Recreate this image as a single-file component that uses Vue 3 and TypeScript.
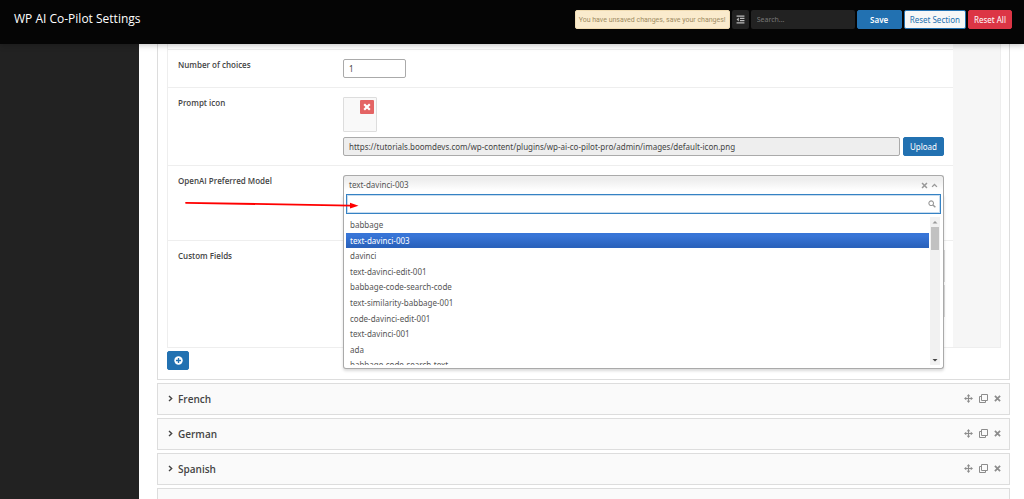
<script setup lang="ts">
import { ref } from 'vue'

const choices = ref(1)
const iconUrl = ref('https://tutorials.boomdevs.com/wp-content/plugins/wp-ai-co-pilot-pro/admin/images/default-icon.png')
const search = ref('')
const modelFilter = ref('')
const selected = ref('text-davinci-003')
const models: string[] = [
  'babbage',
  'text-davinci-003',
  'davinci',
  'text-davinci-edit-001',
  'babbage-code-search-code',
  'text-similarity-babbage-001',
  'code-davinci-edit-001',
  'text-davinci-001',
  'ada',
  'babbage-code-search-text',
]
// The last group is new and has no name yet.
const languages: string[] = ['French', 'German', 'Spanish', '']
</script>

<template>
  <div class="page">
    <header class="topbar">
      <h1>WP AI Co-Pilot Settings</h1>
      <div class="tools">
        <div class="notice">You have unsaved changes, save your changes!</div>
        <button class="expand" type="button" aria-label="Show all settings">
          <svg viewBox="0 0 16 16" width="9" height="9">
            <path d="M1 2h14M7 6h8M7 10h8M1 14h14" stroke="#bbb" stroke-width="1.8" fill="none" />
            <path d="M5 4.5v7L1 8z" fill="#bbb" />
          </svg>
        </button>
        <input v-model="search" class="search" type="text" placeholder="Search..." aria-label="Search" />
        <button class="btn save" type="button">Save</button>
        <button class="btn outline" type="button">Reset Section</button>
        <button class="btn danger" type="button">Reset All</button>
      </div>
    </header>

    <div class="body">
      <aside class="sidebar"></aside>
      <main class="content">
        <section class="panel">
          <div class="repeater">
            <div class="fields">
              <div class="row spacer"></div>
              <div class="row choices">
                <label class="title" for="choices">Number of choices</label>
                <div class="field"><input id="choices" v-model="choices" class="text number" type="text" /></div>
              </div>
              <div class="row prompt">
                <label class="title" for="icon-url">Prompt icon</label>
                <div class="field">
                  <div class="preview">
                    <button type="button" aria-label="Remove icon">
                      <svg viewBox="0 0 10 10" width="8" height="8"><path d="M1.5 1.5l7 7M8.5 1.5l-7 7" stroke="#fff" stroke-width="2.7" /></svg>
                    </button>
                  </div>
                  <div class="upload">
                    <input id="icon-url" v-model="iconUrl" class="text" type="text" readonly />
                    <button class="btn" type="button">Upload</button>
                  </div>
                </div>
              </div>
              <div class="row model">
                <label class="title" for="model-filter">OpenAI Preferred Model</label>
                <div class="field">
                  <div class="chosen">
                    <div class="current">
                      <span>{{ selected }}</span>
                      <button type="button" aria-label="Clear model">
                        <svg viewBox="0 0 10 10" width="7" height="7"><path d="M1.5 1.5l7 7M8.5 1.5l-7 7" stroke="#999" stroke-width="2.2" /></svg>
                      </button>
                      <svg viewBox="0 0 10 10" width="7" height="7"><path d="M1.5 7L5 3.5 8.5 7" stroke="#999" stroke-width="1.8" fill="none" /></svg>
                    </div>
                    <div class="drop">
                      <div class="filter">
                        <input id="model-filter" v-model="modelFilter" type="text" />
                        <svg viewBox="0 0 10 10" width="8" height="8"><circle cx="4" cy="4" r="2.9" fill="none" stroke="#999" stroke-width="1.4" /><path d="M6.2 6.2L9.2 9.2" stroke="#999" stroke-width="1.8" /></svg>
                      </div>
                      <div class="results">
                        <ul role="listbox" aria-label="Models">
                          <li
                            v-for="model in models"
                            :key="model"
                            role="option"
                            :aria-selected="model === selected"
                            :class="{ active: model === selected }"
                            @click="selected = model"
                          >{{ model }}</li>
                        </ul>
                        <div class="scrollbar">
                          <svg viewBox="0 0 10 10" width="10" height="10"><path d="M2.5 6.5h5L5 4z" fill="#999" /></svg>
                          <i></i>
                          <svg class="down" viewBox="0 0 10 10" width="10" height="10"><path d="M2.5 4h5L5 6.5z" fill="#444" /></svg>
                        </div>
                      </div>
                    </div>
                  </div>
                </div>
                <svg class="pointer" viewBox="0 0 174 8" width="174" height="8">
                  <path d="M1 1.8L166 4.6" stroke="#f00" stroke-width="1.8" stroke-linecap="round" />
                  <path d="M165 1.8l8.5 3-8.5 2.8z" fill="#f00" />
                </svg>
              </div>
              <div class="row custom">
                <div class="title">Custom Fields</div>
                <div class="field stack">
                  <div class="entry"></div>
                  <div class="entry"></div>
                </div>
              </div>
            </div>
            <div class="helper"></div>
          </div>
          <button class="btn add" type="button" aria-label="Add prompt">
            <svg viewBox="0 0 10 10" width="9" height="9"><circle cx="5" cy="5" r="4.7" fill="#fff" /><path d="M5 2.2v5.6M2.2 5h5.6" stroke="#2271b1" stroke-width="1.5" /></svg>
          </button>
        </section>

        <section v-for="(language, index) in languages" :key="index" class="group">
          <svg class="caret" viewBox="0 0 6 8" width="5" height="7"><path d="M1.2 1L4.4 4 1.2 7" stroke="#444" stroke-width="1.7" fill="none" /></svg>
          <h2>{{ language }}</h2>
          <div class="actions">
            <button type="button" aria-label="Move">
              <svg viewBox="0 0 18 18" width="9" height="9"><path d="M9 3v12M3 9h12" stroke="#8c8c8c" stroke-width="2.4" /><path d="M9 0l3.5 4.5h-7zM9 18l3.5-4.5h-7zM0 9l4.5-3.5v7zM18 9l-4.5-3.5v7z" fill="#8c8c8c" /></svg>
            </button>
            <button type="button" aria-label="Duplicate">
              <svg viewBox="0 0 18 18" width="9" height="9"><path d="M5 1h12v12H5zM4 5H1v12h12v-3" stroke="#8c8c8c" stroke-width="2" stroke-linejoin="round" fill="none" /></svg>
            </button>
            <button type="button" aria-label="Remove">
              <svg viewBox="0 0 10 10" width="7" height="7"><path d="M1.3 1.3l7.4 7.4M8.7 1.3L1.3 8.7" stroke="#8c8c8c" stroke-width="2.5" /></svg>
            </button>
          </div>
        </section>
      </main>
    </div>
  </div>
</template>

<style>
body {
  margin: 0;
}
</style>

<style scoped>
* {
  box-sizing: border-box;
}
.page {
  display: flex;
  flex-direction: column;
  height: 100vh;
  overflow: hidden;
  background: #fff;
  color: #555;
  font: 8px/12px "Noto Sans", "Open Sans", sans-serif;
}
button,
input {
  margin: 0;
  font: inherit;
}
button {
  display: flex;
  align-items: center;
  justify-content: center;
  padding: 0;
  border: 0;
  background: none;
  cursor: pointer;
}
svg {
  display: block;
  flex: none;
}
.topbar {
  display: flex;
  flex: none;
  align-items: flex-start;
  justify-content: space-between;
  height: 44px;
  padding: 10px 12px 0 14px;
  background: #050505;
  box-shadow: 0 1px 6px rgba(0, 0, 0, 0.25);
  z-index: 2;
}
h1 {
  margin: 0;
  color: #fff;
  font-family: "Open Sans", sans-serif;
  font-size: 12px;
  font-weight: 400;
  line-height: 18px;
}
.tools {
  display: flex;
  gap: 2px;
}
.tools .btn {
  padding: 0 5px;
}
.notice {
  height: 19px;
  padding: 0 3px;
  border: 1px solid #f0dcb4;
  border-radius: 2px;
  background: #faebcd;
  color: #a08c64;
  font-family: Roboto, sans-serif;
  font-size: 7px;
  line-height: 18px;
}
.expand {
  width: 17px;
  height: 19px;
  border-radius: 2px;
  background: #222;
}
.search {
  width: 104px;
  height: 19px;
  padding: 0 6px;
  border: 0;
  border-radius: 2px;
  background: #222;
  color: #999;
  font-size: 7px;
}
.search::placeholder {
  color: #777;
}
.btn {
  height: 19px;
  padding: 0 6px;
  border: 1px solid #2271b1;
  border-radius: 2px;
  background: #2271b1;
  color: #fff;
}
.tools .save {
  width: 45px;
  font-weight: 600;
}
.outline {
  background: #f6f7f7;
  color: #2271b1;
}
.danger {
  border-color: #dc3545;
  background: #dc3545;
}
.body {
  display: flex;
  flex: 1;
  min-height: 0;
}
.sidebar {
  flex: none;
  width: 139px;
  background: #222;
}
.content {
  flex: 1;
  min-width: 0;
  padding: 0 14px 0 18px;
}
.panel {
  padding: 0 8px 9px 9px;
  border: 1px solid #ddd;
  border-top: 0;
}
.repeater {
  display: flex;
  border: 1px solid #eee;
  border-top: 0;
}
.fields {
  flex: 1;
  min-width: 0;
}
.helper {
  flex: none;
  width: 47px;
  background: #f6f6f6;
}
.row {
  display: flex;
  padding: 9px 9px 0 10px;
  border-bottom: 1px solid #eee;
}
.row:last-child {
  border-bottom: 0;
}
.spacer {
  height: 6px;
  padding: 0;
}
.choices {
  height: 38px;
}
.prompt {
  height: 78px;
}
.model {
  position: relative;
  height: 75px;
}
.custom {
  height: 106px;
}
.title {
  flex: none;
  width: 165px;
  color: #444;
  font-family: "Open Sans", sans-serif;
  font-weight: 600;
}
.field {
  flex: 1;
  min-width: 0;
}
.text {
  height: 19px;
  padding: 0 5px;
  border: 1px solid #aaa;
  border-radius: 2px;
  background: #fff;
  color: #444;
}
.number {
  display: block;
  width: 63px;
}
.preview {
  display: flex;
  align-items: flex-start;
  justify-content: flex-end;
  width: 34px;
  height: 35px;
  padding: 2px;
  border: 1px solid #ddd;
  border-radius: 1px;
  background: #f9f9f9;
}
.preview button {
  width: 14px;
  height: 14px;
  border-radius: 1px;
  background: #e46464;
}
.upload {
  display: flex;
  gap: 3px;
  margin-top: 5px;
}
.upload .text {
  flex: 1;
  min-width: 0;
  background: #eee;
}
.chosen {
  position: relative;
}
.current {
  display: flex;
  gap: 3px;
  align-items: center;
  height: 19px;
  padding: 0 5px;
  border: 1px solid #aaa;
  border-bottom: 0;
  border-radius: 3px 3px 0 0;
  background: linear-gradient(#eee 20%, #fff 80%);
}
.current span {
  flex: 1;
}
.drop {
  position: absolute;
  z-index: 1;
  top: 19px;
  right: 0;
  left: 0;
  padding: 0 2px 3px;
  border: 1px solid #aaa;
  border-top: 0;
  border-radius: 0 0 3px 3px;
  background: #fff;
  box-shadow: 0 2px 3px rgba(0, 0, 0, 0.15);
}
.filter {
  display: flex;
  align-items: center;
  height: 20px;
  padding: 0 4px;
  border: 1px solid #3582c4;
  box-shadow: 0 0 0 1px #c8dcee inset;
}
.filter input {
  flex: 1;
  min-width: 0;
  height: 16px;
  padding: 0;
  border: 0;
  outline: 0;
  background: none;
}
.pointer {
  position: absolute;
  z-index: 2;
  top: 35px;
  left: 17px;
}
.results {
  display: flex;
  height: 148px;
  margin-top: 3px;
  overflow: hidden;
}
ul {
  display: grid;
  flex: 1;
  grid-template-rows: repeat(10, 1fr);
  height: 156px;
  margin: 0;
  padding: 0;
  list-style: none;
}
li {
  padding: 0 4px;
  line-height: 15px;
}
.active {
  background: linear-gradient(#3875d7 20%, #2a62bc 90%);
  color: #fff;
}
.scrollbar {
  display: flex;
  flex: none;
  flex-direction: column;
  width: 10px;
  margin: 0 1px;
  background: #f1f1f1;
}
.scrollbar i {
  width: 8px;
  height: 23px;
  margin-left: 1px;
  background: #c1c1c1;
}
.down {
  margin-top: auto;
}
.stack {
  display: flex;
  flex-direction: column;
  gap: 3px;
  margin-right: -1px;
}
.entry {
  height: 32px;
  border: 1px solid #ddd;
  background: #fafafa;
}
.add {
  width: 22px;
  margin-top: 3px;
}
.group {
  display: flex;
  align-items: center;
  height: 32px;
  margin-top: 3px;
  padding: 0 8px 0 10px;
  border: 1px solid #ddd;
  background: #fafafa;
}
.caret,
.actions {
  margin-bottom: 2px;
}
h2 {
  flex: 1;
  margin: 0 0 0 5px;
  color: #444;
  font-family: "Open Sans", sans-serif;
  font-size: 10px;
  font-weight: 600;
  line-height: 14px;
}
.actions {
  display: flex;
  gap: 6px;
}
</style>
